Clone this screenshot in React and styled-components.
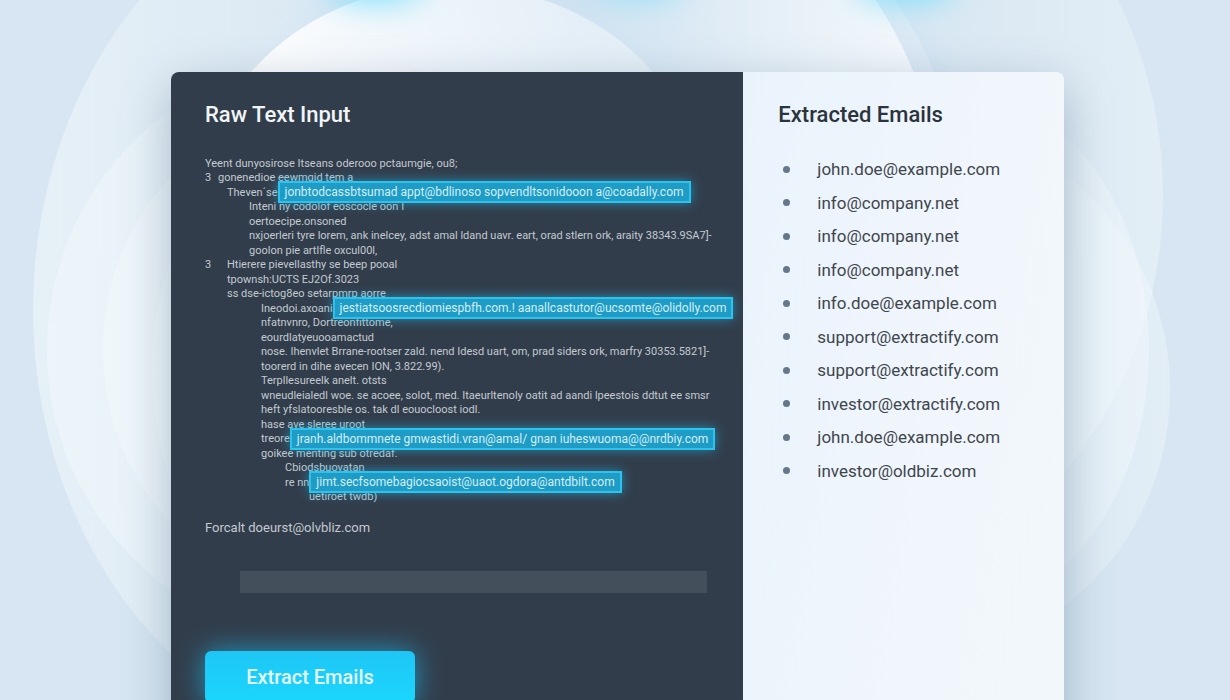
import React from "react";
import styled, { createGlobalStyle } from "styled-components";

const emails = [
  "john.doe@example.com",
  "info@company.net",
  "info@company.net",
  "info@company.net",
  "info.doe@example.com",
  "support@extractify.com",
  "support@extractify.com",
  "investor@extractify.com",
  "john.doe@example.com",
  "investor@oldbiz.com",
];

const lines = [
  { indent: 0, text: "Yeent dunyosirose Itseans oderooo pctaumgie, ou8;" },
  { indent: 0, mark: "3", gap: 13, text: "gonenedioe eewmgid tem a" },
  {
    indent: 22,
    text: "Theven´se",
    found: "jonbtodcassbtsumad appt@bdlinoso sopvendltsonidooon a@coadally.com",
  },
  { indent: 44, text: "Inteni ny codolof eoscocle oon I" },
  { indent: 44, text: "oertoecipe.onsoned" },
  {
    indent: 44,
    text: "nxjoerleri tyre lorem, ank inelcey, adst amal ldand uavr. eart, orad stlern ork, araity 38343.9SA7]-",
  },
  { indent: 44, text: "goolon pie artlfle oxcul00l," },
  { indent: 0, mark: "3", gap: 22, text: "Htierere pievellasthy se beep pooal" },
  { indent: 22, text: "tpownsh:UCTS EJ2Of.3023" },
  { indent: 22, text: "ss dse-ictog8eo setarpmrp aorre" },
  {
    indent: 56,
    text: "Ineodoi.axoani",
    found: "jestiatsoosrecdiomiespbfh.com.! aanallcastutor@ucsomte@olidolly.com",
  },
  { indent: 56, text: "nfatnvnro, Dortreonfittome," },
  { indent: 56, text: "eourdlatyeuooamactud" },
  {
    indent: 56,
    text: "nose. Ihenvlet Brrane-rootser zald. nend Idesd uart, om, prad siders ork, marfry 30353.5821]-",
  },
  { indent: 56, text: "toorerd in dihe avecen ION, 3.822.99)." },
  { indent: 56, text: "Terpllesureelk anelt. otsts" },
  {
    indent: 56,
    text: "wneudleialedl woe. se acoee, solot, med. Itaeurltenoly oatit ad aandi lpeestois ddtut ee smsr",
  },
  { indent: 56, text: "heft yfslatooresble os. tak dl eouocloost iodl." },
  { indent: 56, text: "hase ave sleree uroot" },
  {
    indent: 56,
    text: "treore",
    found: "jranh.aldbommnete gmwastidi.vran@amal/ gnan iuheswuoma@@nrdbiy.com",
  },
  { indent: 56, text: "goikee menting sub otredaf." },
  { indent: 80, text: "Cbiodsbuovatan" },
  {
    indent: 80,
    text: "re nn",
    found: "jimt.secfsomebagiocsaoist@uaot.ogdora@antdbilt.com",
  },
  { indent: 104, text: "uetiroet twdb)" },
];

export default function App() {
  return (
    <Page>
      <GlobalStyle />
      <Backdrop />
      <Card>
        <RawPanel>
          <Title id="raw-title">Raw Text Input</Title>
          <RawText>
            {lines.map((line, i) => (
              <Line key={i} $indent={line.indent}>
                {line.mark && <Marker $gap={line.gap}>{line.mark}</Marker>}
                <span>{line.text}</span>
                {line.found && <Found>{line.found}</Found>}
              </Line>
            ))}
          </RawText>
          <LastLine>Forcalt doeurst@olvbliz.com</LastLine>
          <RawField type="text" aria-labelledby="raw-title" />
          <ExtractButton type="button">Extract Emails</ExtractButton>
        </RawPanel>
        <ResultPanel>
          <Title>Extracted Emails</Title>
          <EmailList>
            {emails.map((email, i) => (
              <EmailItem key={i}>{email}</EmailItem>
            ))}
          </EmailList>
        </ResultPanel>
      </Card>
    </Page>
  );
}

const Backdrop = () => (
  <BackdropSvg viewBox="0 0 1230 700" preserveAspectRatio="xMidYMin slice" aria-hidden="true">
    <defs>
      <linearGradient id="left" x1="0" y1="0" x2="1" y2="0">
        <stop offset="0" stopColor="#f4fafc" stopOpacity="0.5" />
        <stop offset="0.45" stopColor="#f4fafc" stopOpacity="0.08" />
        <stop offset="0.8" stopColor="#f4fafc" stopOpacity="0" />
      </linearGradient>
      <linearGradient id="right" x1="1" y1="0" x2="0" y2="0">
        <stop offset="0" stopColor="#f4fafc" stopOpacity="0.4" />
        <stop offset="0.35" stopColor="#f4fafc" stopOpacity="0.05" />
        <stop offset="0.8" stopColor="#f4fafc" stopOpacity="0" />
      </linearGradient>
      <linearGradient id="dome" x1="0" y1="0.3" x2="0.9" y2="0.1">
        <stop offset="0" stopColor="#fff" stopOpacity="1" />
        <stop offset="1" stopColor="#fff" stopOpacity="0.35" />
      </linearGradient>
      <linearGradient id="arch" x1="0" y1="0" x2="1" y2="0">
        <stop offset="0.4" stopColor="#fff" stopOpacity="0" />
        <stop offset="1" stopColor="#fff" stopOpacity="0.75" />
      </linearGradient>
      <filter id="soft" x="-100%" y="-200%" width="300%" height="500%">
        <feGaussianBlur stdDeviation="16" />
      </filter>
    </defs>
    <ellipse cx="400" cy="310" rx="367" ry="440" fill="url(#left)" />
    <ellipse cx="347" cy="350" rx="300" ry="297" fill="url(#left)" />
    <ellipse cx="303" cy="350" rx="200" ry="230" fill="url(#left)" />
    <ellipse cx="292" cy="370" rx="140" ry="220" fill="url(#left)" />
    <ellipse cx="813" cy="195" rx="350" ry="397" fill="url(#right)" />
    <ellipse cx="920" cy="390" rx="250" ry="264" fill="url(#right)" />
    <ellipse cx="949" cy="350" rx="200" ry="264" fill="url(#right)" />
    <ellipse cx="610" cy="260" rx="380" ry="380" fill="#c3dcf0" fillOpacity="0.4" filter="url(#soft)" />
    <ellipse cx="650" cy="260" rx="322" ry="400" fill="url(#arch)" fillOpacity="0.3" />
    <ellipse cx="640" cy="260" rx="310" ry="400" fill="url(#arch)" />
    <ellipse cx="452" cy="200" rx="250" ry="215" fill="url(#dome)" />
    <ellipse cx="375" cy="-18" rx="50" ry="20" fill="#7cdffb" filter="url(#soft)" />
    <ellipse cx="640" cy="-20" rx="45" ry="18" fill="#8fe0f8" filter="url(#soft)" />
    <ellipse cx="905" cy="-18" rx="50" ry="20" fill="#7cdffb" filter="url(#soft)" />
  </BackdropSvg>
);

const GlobalStyle = createGlobalStyle`
  * {
    box-sizing: border-box;
  }
  body {
    margin: 0;
    background: #d7e6f2;
    font-family: Roboto, "Liberation Sans", sans-serif;
  }
`;

const Page = styled.main`
  position: relative;
  height: 100vh;
  padding: 72px 166px 0 171px;
  overflow: hidden;
`;

const BackdropSvg = styled.svg`
  position: absolute;
  inset: 0;
  width: 100%;
  height: 100%;
`;

const Card = styled.div`
  position: relative;
  display: grid;
  grid-template-columns: 573fr 321fr;
  border-radius: 8px;
  box-shadow: 0 16px 48px rgba(70, 100, 130, 0.4);
`;

const RawPanel = styled.section`
  min-width: 0;
  padding: 28px 34px 40px;
  border-radius: 8px 0 0 8px;
  background: #323d4b;
  color: #f1f5f8;
`;

const ResultPanel = styled.section`
  padding: 28px 35px;
  border-radius: 0 8px 8px 0;
  background: linear-gradient(100deg, #eaf3fc, #f0f6fb 60%, #f2f7fb);
  color: #2b333d;
`;

const Title = styled.h2`
  margin: 0;
  font-size: 22px;
  font-weight: 500;
  line-height: 30px;
`;

const RawText = styled.div`
  margin-top: 26px;
  color: #c3cad1;
  font-size: 11px;
`;

const Line = styled.div`
  display: flex;
  align-items: center;
  height: 14px;
  padding-left: ${(props) => props.$indent}px;
  white-space: nowrap;
  &:nth-child(even) {
    height: 15px;
  }
`;

const Marker = styled.span`
  width: ${(props) => props.$gap}px;
`;

const Found = styled.mark`
  position: relative;
  padding: 0 5px;
  border: 2px solid #2cc4ee;
  background: #1e9cc6;
  box-shadow: 0 0 12px rgba(30, 190, 240, 0.6);
  color: #d3eef8;
  font-size: 12px;
  line-height: 18px;
`;

const LastLine = styled.p`
  margin: 14px 0 0;
  color: #c3cad1;
  font-size: 13px;
  line-height: 20px;
`;

const RawField = styled.input`
  display: block;
  width: calc(100% - 37px);
  height: 22px;
  margin: 33px 0 0 35px;
  padding: 0 8px;
  border: 0;
  background: #444f5c;
  color: #f1f5f8;
`;

const ExtractButton = styled.button`
  width: 210px;
  height: 52px;
  margin-top: 58px;
  border: 0;
  border-radius: 6px;
  background: linear-gradient(#1fc6f5, #1ad6fd);
  box-shadow: 0 0 28px rgba(30, 190, 240, 0.7);
  color: #e3f7fd;
  font-family: inherit;
  font-size: 20px;
  font-weight: 500;
  cursor: pointer;
`;

const EmailList = styled.ul`
  margin: 22px 0 0;
  padding: 0;
  list-style: none;
`;

const EmailItem = styled.li`
  display: flex;
  align-items: center;
  height: 34px;
  color: #3f464e;
  font-size: 17px;
  &:nth-child(even) {
    height: 33px;
  }
  &::before {
    content: "";
    width: 7px;
    height: 7px;
    margin: 0 27px 0 5px;
    border-radius: 50%;
    background: #64788a;
  }
`;
